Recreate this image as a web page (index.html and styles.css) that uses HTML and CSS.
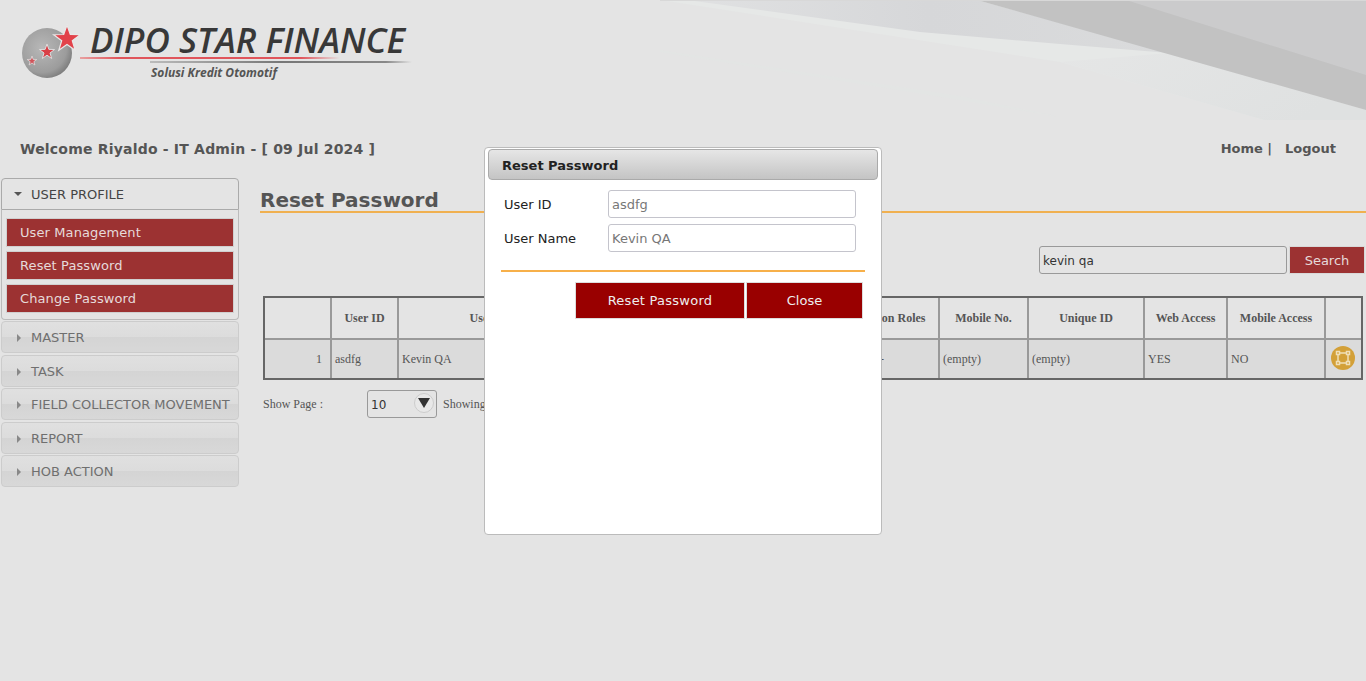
FILE: index.html
```html
<!DOCTYPE html>
<html lang="en">
<head>
    <meta charset="UTF-8">
    <meta name="viewport" content="width=device-width, initial-scale=1.0">
    <title>Reset Password</title>
    <link rel="stylesheet" href="styles.css">
</head>
<body>
    <header class="banner">
        <svg class="swoosh" viewBox="0 0 706 120" preserveAspectRatio="none">
            <defs>
                <linearGradient id="fade" x1="0" y1="0" x2="1" y2="0.3">
                    <stop offset="0" stop-color="#e5e6e6"/>
                    <stop offset="1" stop-color="#dfe1e1"/>
                </linearGradient>
                <linearGradient id="band" x1="0" y1="0" x2="1" y2="0">
                    <stop offset="0" stop-color="#e0e1e2"/>
                    <stop offset="0.5" stop-color="#d6d7d9"/>
                    <stop offset="1" stop-color="#dadbdc"/>
                </linearGradient>
            </defs>
            <polygon points="0,0 706,0 706,120 604,120 400,62 0,0" fill="#e6e8e7"/>
            <polygon points="0,50 300,96 405,118 300,100 0,52" fill="#e3e5e4"/>
            <polygon points="400,62 509,53 706,110 706,120 604,120" fill="url(#fade)"/>
            <polygon points="27,0 317,0 509,53 400,44 260,32" fill="url(#band)"/>
            <polygon points="317,0 706,0 706,110" fill="#c2c2c2"/>
            <polygon points="466,0 706,0 706,75" fill="#cbcbcc"/>
            <rect x="0" y="0" width="706" height="1" fill="#d8d8d8"/>
        </svg>
        <div class="logo">
            <svg class="logo-mark" viewBox="0 0 58 54">
                <defs>
                    <radialGradient id="globe" cx="0.4" cy="0.4" r="0.7">
                        <stop offset="0" stop-color="#b8b8b8"/>
                        <stop offset="0.7" stop-color="#9c9c9c"/>
                        <stop offset="1" stop-color="#707070"/>
                    </radialGradient>
                </defs>
                <circle cx="25" cy="29" r="25" fill="url(#globe)"/>
                <polygon points="45,1 48.300,10.500 58.300,10.700 50.300,16.700 53.200,26.300 45,20.600 36.800,26.300 39.700,16.700 31.700,10.700 41.700,10.500" fill="#e2424a" stroke="#e8e8e8" stroke-width="1.200"/>
                <polygon points="25,20 26.900,25.400 32.600,25.500 28,29 29.700,34.500 25,31.200 20.300,34.500 22,29 17.400,25.500 23.100,25.400" fill="#d93f46" stroke="#ddd" stroke-width="1"/>
                <polygon points="10,32 11.200,35.400 14.800,35.500 11.900,37.600 12.900,41 10,39 7.100,41 8.100,37.600 5.200,35.500 8.800,35.400" fill="#d0555b" stroke="#ddd" stroke-width="0.8"/>
            </svg>
            <div class="logo-text">
                <div class="logo-name">DIPO STAR FINANCE</div>
                <div class="logo-rule-red"></div>
                <div class="logo-rule-grey"></div>
                <div class="logo-tag">Solusi Kredit Otomotif</div>
            </div>
        </div>
    </header>

    <div class="topbar">
        <div class="welcome">Welcome Riyaldo - IT Admin - [ 09 Jul 2024 ]</div>
        <div class="toplinks">Home |<span class="logout">Logout</span></div>
    </div>

    <div class="layout">
        <nav class="sidebar">
            <div class="acc-head open"><span class="arrow-down"></span>USER PROFILE</div>
            <div class="acc-body">
                <a class="menu-item">User Management</a>
                <a class="menu-item">Reset Password</a>
                <a class="menu-item">Change Password</a>
            </div>
            <div class="acc-head"><span class="arrow-right"></span>MASTER</div>
            <div class="acc-head"><span class="arrow-right"></span>TASK</div>
            <div class="acc-head"><span class="arrow-right"></span>FIELD COLLECTOR MOVEMENT</div>
            <div class="acc-head"><span class="arrow-right"></span>REPORT</div>
            <div class="acc-head"><span class="arrow-right"></span>HOB ACTION</div>
        </nav>

        <main class="content">
            <h1 class="page-title">Reset Password</h1>
            <div class="search-row">
                <input class="search-input" type="text" value="kevin qa">
                <button class="search-btn">Search</button>
            </div>
            <table class="grid">
                <colgroup>
                    <col class="c-no"><col class="c-id"><col class="c-name"><col class="c-branch"><col class="c-roles">
                    <col class="c-mobile"><col class="c-unique"><col class="c-web"><col class="c-mob"><col class="c-act">
                </colgroup>
                <thead>
                    <tr>
                        <th></th><th>User ID</th><th>User Name</th><th></th><th>Application Roles</th>
                        <th>Mobile No.</th><th>Unique ID</th><th>Web Access</th><th>Mobile Access</th><th></th>
                    </tr>
                </thead>
                <tbody>
                    <tr>
                        <td class="num">1</td><td>asdfg</td><td>Kevin QA</td><td></td><td class="mid">-</td>
                        <td>(empty)</td><td>(empty)</td><td>YES</td><td>NO</td>
                        <td class="act">
                            <span class="act-icon">
                                <svg viewBox="0 0 16 16" width="16" height="16" fill="none" stroke="#f0dfb8" stroke-width="1.500">
                                    <rect x="3" y="3" width="10" height="10"/>
                                    <rect x="1.500" y="1.500" width="3" height="3" fill="#d3a038"/>
                                    <rect x="11.500" y="1.500" width="3" height="3" fill="#d3a038"/>
                                    <rect x="1.500" y="11.500" width="3" height="3" fill="#d3a038"/>
                                    <rect x="11.500" y="11.500" width="3" height="3" fill="#d3a038"/>
                                </svg>
                            </span>
                        </td>
                    </tr>
                </tbody>
            </table>
            <div class="pager">
                <span class="pager-label">Show Page :</span>
                <div class="page-select">10<span class="select-btn"></span></div>
                <span class="pager-info">Showing 1 to 1 of 1 entries</span>
            </div>
        </main>
    </div>

    <div class="modal">
        <div class="modal-title">Reset Password</div>
        <div class="form-row">
            <label class="form-label">User ID</label>
            <input class="form-input" type="text" value="asdfg">
        </div>
        <div class="form-row">
            <label class="form-label">User Name</label>
            <input class="form-input" type="text" value="Kevin QA">
        </div>
        <div class="modal-rule"></div>
        <div class="modal-actions">
            <button class="modal-btn wide">Reset Password</button>
            <button class="modal-btn narrow">Close</button>
        </div>
    </div>
</body>
</html>
```

FILE: styles.css
```css
body {
    margin: 0;
    height: 681px;
    overflow: hidden;
    position: relative;
    background-color: #e4e4e4;
    font: 13px "DejaVu Sans", Verdana, sans-serif;
    color: #555;
}
.banner {
    height: 130px;
    position: relative;
}
.swoosh {
    position: absolute;
    top: 0;
    right: 0;
    width: 706px;
    height: 120px;
}
.logo {
    position: absolute;
    left: 22px;
    top: 24px;
    display: flex;
}
.logo-mark {
    width: 58px;
    height: 54px;
}
.logo-text {
    width: 332px;
}
.logo-name {
    font: italic 600 35px/32px "Open Sans", sans-serif;
    color: #383838;
    padding-left: 10px;
    white-space: nowrap;
}
.logo-rule-red {
    height: 2px;
    margin-top: 1px;
    width: 260px;
    background: linear-gradient(90deg, #e8a0a0 0, #e0555b 15%, #e0555b 85%, transparent 100%);
}
.logo-rule-grey {
    height: 2px;
    margin: 2px 0 0 70px;
    background: linear-gradient(90deg, #bbb 0, #777 50%, #888 90%, transparent 100%);
}
.logo-tag {
    font: italic 700 12px/14px "Open Sans", sans-serif;
    color: #555;
    padding-left: 71px;
    margin-top: 3px;
}
.topbar {
    display: flex;
    justify-content: space-between;
    padding: 10px 30px 0 20px;
    height: 48px;
    box-sizing: border-box;
    font-weight: 700;
}
.welcome {
    font-size: 14px;
    line-height: 18px;
    letter-spacing: .2px;
}
.toplinks {
    margin-top: 1px;
    font-size: 13px;
    line-height: 16px;
}
.logout {
    margin-left: 13px;
}
.layout {
    display: flex;
}
.sidebar {
    width: 238px;
    margin-left: 1px;
    flex-shrink: 0;
}
.acc-head {
    height: 30px;
    margin-bottom: 1.500px;
    padding-left: 29px;
    position: relative;
    line-height: 31px;
    border: 1px solid #ccc;
    border-radius: 4px;
    color: #6f6f6f;
    background: linear-gradient(#e0e0e0 0, #dcdcdc 50%, #d4d4d4 50%, #d8d8d8 100%);
    white-space: nowrap;
}
.acc-head.open {
    margin-bottom: 0;
    border-color: #aaa;
    border-radius: 4px 4px 0 0;
    background: #e4e4e4;
    color: #444;
}
.arrow-down {
    position: absolute;
    left: 12px;
    top: 13px;
    border: 4px solid transparent;
    border-top: 4px solid #555;
    border-bottom: 0;
}
.arrow-right {
    position: absolute;
    left: 15px;
    top: 12px;
    border: 4px solid transparent;
    border-left: 4px solid #888;
    border-right: 0;
}
.acc-body {
    padding: 8px 4px 6px 4px;
    margin-bottom: 1px;
    display: flex;
    flex-direction: column;
    gap: 4px;
    border: 1px solid #bbb;
    border-top: 0;
    border-radius: 0 0 4px 4px;
}
.menu-item {
    height: 27px;
    line-height: 28px;
    padding-left: 13px;
    color: #e6dada;
    background-color: #9c3232;
    border: 1px solid #d0d0d0;
    letter-spacing: .1px;
}
.content {
    flex: 1;
    min-width: 0;
    padding-left: 21px;
}
.page-title {
    margin: 10px 0 0;
    height: 23px;
    font-size: 20px;
    line-height: 25px;
    color: #555;
    border-bottom: 2px solid #f0b050;
}
.search-row {
    display: flex;
    justify-content: flex-end;
    gap: 2px;
    margin: 33px 1px 0 0;
}
.search-input {
    width: 248px;
    height: 28px;
    box-sizing: border-box;
    padding: 1px 3px 0;
    font: 12px "DejaVu Sans", sans-serif;
    color: #333;
    background: #e4e4e4;
    border: 1px solid #999;
    border-radius: 3px;
}
.search-btn {
    width: 76px;
    height: 28px;
    padding: 0;
    border: 1px solid #d8d8d8;
    font: 13px "DejaVu Sans", sans-serif;
    color: #e6dada;
    background-color: #9c3232;
}
.grid {
    width: 1100px;
    margin: 22px 0 0 3px;
    table-layout: fixed;
    border-collapse: separate;
    border-spacing: 0;
    border: 2px solid #666;
    font: 12px "Liberation Serif", serif;
    color: #555;
}
.grid th, .grid td {
    border-right: 2px solid #999;
    padding: 0 3px;
    overflow: hidden;
    white-space: nowrap;
}
.grid th:last-child, .grid td:last-child {
    border-right: 0;
}
.grid th {
    text-align: center;
    height: 40px;
    border-bottom: 2px solid #999;
}
.grid td {
    height: 38px;
    background-color: #dbdbdb;
}
.grid td.num {
    text-align: right;
    padding-right: 8px;
}
.grid td.mid {
    text-align: center;
    padding-left: 7px;
}
.grid td.act {
    text-align: center;
    padding: 0 1px 3px 0;
    height: 35px;
}
.c-no { width: 67px; }
.c-id { width: 67px; }
.c-name { width: 200px; }
.c-branch { width: 223px; }
.c-roles { width: 118px; }
.c-mobile { width: 89px; }
.c-unique { width: 116px; }
.c-web { width: 83px; }
.c-mob { width: 98px; }
.c-act { width: 35px; }
.act-icon {
    display: inline-flex;
    align-items: center;
    justify-content: center;
    width: 24px;
    height: 24px;
    vertical-align: middle;
    border-radius: 50%;
    background-color: #d3a038;
}
.pager {
    display: flex;
    align-items: center;
    margin: 10px 0 0 3px;
    font: 12px "Liberation Serif", serif;
}
.pager-label {
    width: 104px;
}
.page-select {
    width: 65px;
    height: 26px;
    padding-left: 3px;
    position: relative;
    font: 12px/28px "DejaVu Sans", sans-serif;
    color: #333;
    border: 1px solid #999;
    border-radius: 3px;
}
.select-btn {
    position: absolute;
    right: 2px;
    top: 2px;
    width: 18px;
    height: 18px;
    border-radius: 50%;
    border: 1px solid #ccc;
    background: #e8e8e8;
}
.select-btn::after {
    content: "";
    position: absolute;
    left: 3px;
    top: 4px;
    border: 6px solid transparent;
    border-top: 10px solid #333;
    border-bottom: 0;
}
.pager-info {
    margin-left: 6px;
}
.modal {
    position: absolute;
    left: 484px;
    top: 147px;
    width: 396px;
    height: 386px;
    background-color: #fff;
    border: 1px solid #bbb;
    border-radius: 4px;
}
.modal-title {
    height: 29px;
    margin: 1px 3px 0;
    padding-left: 13px;
    line-height: 31px;
    font-weight: 700;
    color: #222;
    background: linear-gradient(#e6e6e6, #c4c4c4);
    border: 1px solid #aaa;
    border-radius: 4px;
}
.form-row {
    display: flex;
    align-items: center;
    margin: 0 0 6px 19px;
}
.modal-title + .form-row {
    margin-top: 10px;
}
.form-label {
    width: 104px;
    color: #222;
}
.form-input {
    width: 248px;
    height: 28px;
    box-sizing: border-box;
    padding: 0 3px;
    font: 13px "DejaVu Sans", sans-serif;
    color: #777;
    background: #fff;
    border: 1px solid #c4c4cc;
    border-radius: 3px;
}
.modal-rule {
    height: 2px;
    margin: 18px 16px 0;
    background-color: #f7b04a;
}
.modal-actions {
    display: flex;
    justify-content: flex-end;
    gap: 1px;
    margin: 10px 18px 0 0;
}
.modal-btn {
    height: 37px;
    padding: 0;
    border: 1px solid #ddd;
    font: 13px "DejaVu Sans", sans-serif;
    color: #eee;
    background-color: #990000;
}
.wide { width: 170px; letter-spacing: .25px; }
.narrow { width: 117px; }
```
